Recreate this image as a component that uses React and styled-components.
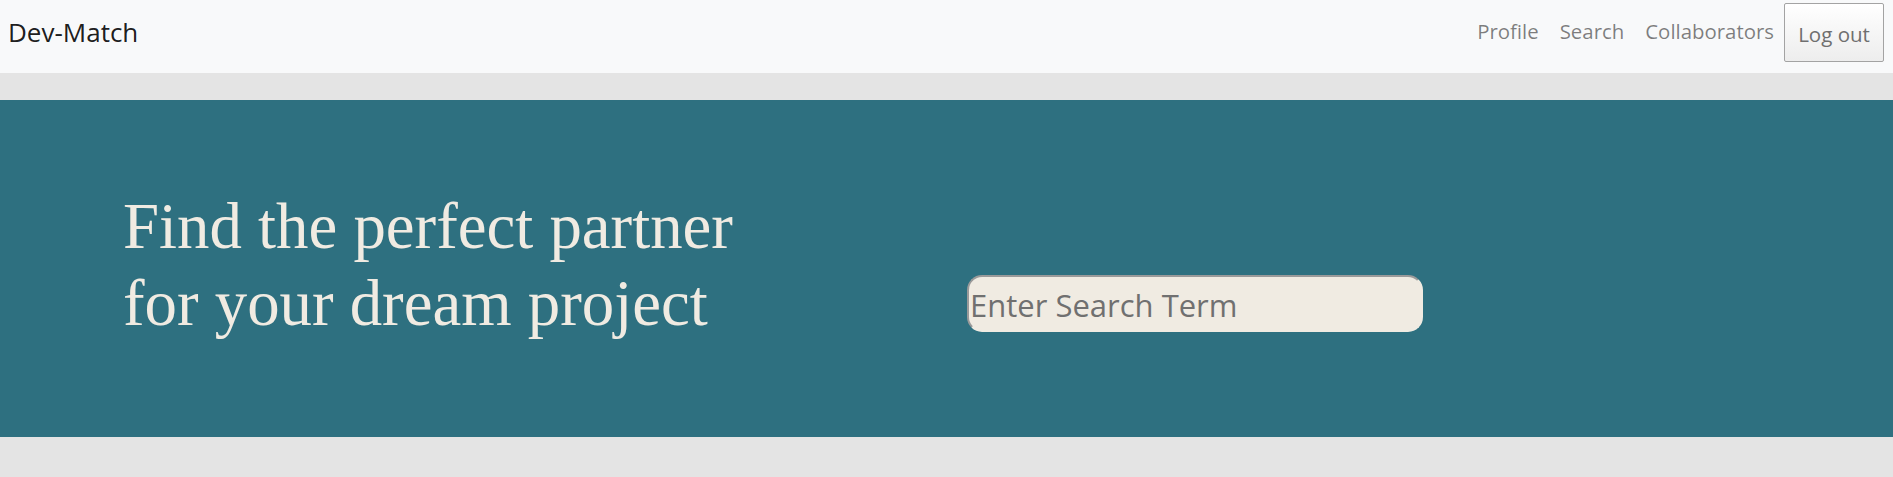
import React from 'react';
import styled, {createGlobalStyle} from 'styled-components';

const GlobalStyle = createGlobalStyle`
  body {
    margin: 0;
    background: #e4e4e4;
    font-family: "Open Sans", "Noto Sans", sans-serif;
  }
`;

const Navbar = styled.nav`
  height: 73px;
  background: #f8f9fa;
  display: flex;
  align-items: flex-start;
  padding: 3px 9px 0 8px;
  box-sizing: border-box;
`;

const Brand = styled.a`
  font-size: 26px;
  color: rgba(0, 0, 0, 0.9);
  text-decoration: none;
  margin-top: 11px;
`;

const NavList = styled.ul`
  list-style: none;
  margin: 0 0 0 auto;
  padding: 0;
  display: flex;
  align-items: flex-start;
`;

const NavItem = styled.li`
  margin-left: ${props => props.gap || 0}px;
`;

const NavLink = styled.a`
  font-size: 20.4px;
  color: rgba(0, 0, 0, 0.5);
  text-decoration: none;
  display: block;
  margin-top: 14px;
`;

const LogOutButton = styled.button`
  width: 100px;
  height: 59px;
  border: 1px solid #a3a3a3;
  border-radius: 2px;
  background: linear-gradient(#ffffff, #ededed);
  color: #6f6f6f;
  font-family: "Open Sans", "Noto Sans", sans-serif;
  font-size: 20.5px;
  padding: 3px 0 0 0;
`;

const Spacer = styled.div`
  height: 27px;
`;

const Hero = styled.section`
  height: 337px;
  background: #2e7080;
  display: grid;
  grid-template-columns: 967px 1fr;
  align-items: center;
`;

const Heading = styled.h1`
  margin: 0 0 8px 0;
  padding-left: 123px;
  width: 640px;
  font-family: "Liberation Serif", "Times New Roman", serif;
  font-weight: normal;
  font-size: 64.8px;
  line-height: 1.18;
  color: #f0ebe2;
`;

const SearchCol = styled.div`
  padding-top: 70px;
`;

const SearchInput = styled.input`
  width: 456px;
  height: 57px;
  box-sizing: border-box;
  background: #f0ebe2;
  border: 2px solid #f0ebe2;
  border-top-color: #9a9a9a;
  border-left-color: #9a9a9a;
  border-radius: 15px;
  padding: 2px 0 0 1px;
  font-family: "Open Sans", "Noto Sans", sans-serif;
  font-size: 31px;
  color: #333;
  outline: none;
  &::placeholder {
    color: #707070;
  }
`;

export default function App() {
  return (
    <>
      <GlobalStyle />
      <Navbar>
        <Brand href="#">Dev-Match</Brand>
        <NavList>
          <NavItem><NavLink href="#">Profile</NavLink></NavItem>
          <NavItem gap={21}><NavLink href="#">Search</NavLink></NavItem>
          <NavItem gap={21}><NavLink href="#">Collaborators</NavLink></NavItem>
          <NavItem gap={10}><LogOutButton>Log out</LogOutButton></NavItem>
        </NavList>
      </Navbar>
      <Spacer />
      <Hero>
        <Heading>Find the perfect partner for your dream project</Heading>
        <SearchCol>
          <SearchInput placeholder="Enter Search Term" />
        </SearchCol>
      </Hero>
    </>
  );
}
